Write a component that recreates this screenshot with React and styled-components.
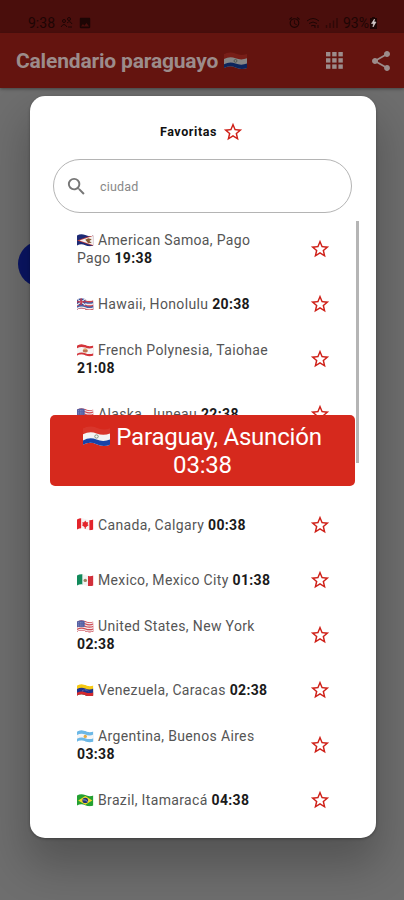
import React, { useId } from "react";
import styled, { createGlobalStyle } from "styled-components";
import { MdStarBorder, MdSearch, MdShare, MdAlarm, MdImage } from "react-icons/md";

const GlobalStyle = createGlobalStyle`
  * {
    box-sizing: border-box;
  }
  body {
    margin: 0;
    font-family: Roboto, "Liberation Sans", sans-serif;
  }
`;

const Screen = styled.div`
  position: relative;
  display: flex;
  flex-direction: column;
  width: 404px;
  height: 900px;
  overflow: hidden;
  background: #6e6e6e;
`;

const StatusBar = styled.div`
  display: flex;
  align-items: center;
  height: 33px;
  padding: 12px 26px 0 28px;
  background: #4a0e0c;
  color: #1d0504;
  font-size: 14px;
`;

const StatusGroup = styled.div`
  display: flex;
  align-items: center;
  gap: ${(props) => props.gap}px;
  margin-left: ${(props) => (props.end ? "auto" : "0")};
`;

const AppBar = styled.div`
  display: flex;
  align-items: center;
  height: 55px;
  padding: 0 11px 0 16px;
  background: #64140f;
  box-shadow: 0 1px 3px rgba(0, 0, 0, 0.4);
  color: #9c8c8b;
  z-index: 1;
`;

const Title = styled.h1`
  display: flex;
  align-items: center;
  gap: 6px;
  flex: 1;
  margin: 0;
  font-size: 21px;
  font-weight: 700;
  letter-spacing: -0.18px;
  white-space: nowrap;
`;

const DimmedFlag = styled.span`
  display: flex;
  filter: brightness(0.55);
`;

const BarIcons = styled.div`
  display: flex;
  align-items: center;
  gap: 26px;
`;

const DayCircle = styled.div`
  position: absolute;
  top: 241px;
  left: 18px;
  width: 46px;
  height: 46px;
  border-radius: 50%;
  background: #0a1565;
`;

const Dialog = styled.div`
  position: relative;
  display: flex;
  flex-direction: column;
  width: 346px;
  height: 742px;
  margin: 8px 0 0 30px;
  border-radius: 15px;
  background: #fff;
  box-shadow: 0 24px 44px 4px rgba(0, 0, 0, 0.24), 0 1px 3px rgba(0, 0, 0, 0.3);
`;

const DialogHeader = styled.div`
  display: flex;
  align-items: center;
  justify-content: center;
  gap: 5px;
  height: 63px;
  padding: 8px 2px 0 0;
  color: #111;
  font-size: 12.5px;
  font-weight: 700;
  letter-spacing: 0.6px;
`;

const SearchBox = styled.label`
  display: flex;
  align-items: center;
  gap: 12px;
  width: 299px;
  height: 54px;
  margin-left: 23px;
  padding-left: 11px;
  border: 1px solid #b4b4b4;
  border-radius: 27px;
  color: #777;
`;

const SearchText = styled.span`
  padding-top: 1px;
  font-size: 12.5px;
  letter-spacing: 0.2px;
  color: #888;
`;

const ListArea = styled.div`
  display: flex;
  flex: 1;
  margin-top: 8px;
`;

const CityList = styled.ul`
  width: 326px;
  margin: 0;
  padding: 0.5px 0 0 47px;
  list-style: none;
`;

const CityRow = styled.li`
  display: flex;
  align-items: center;
  justify-content: space-between;
  height: 55.15px;
  padding-right: 25px;
`;

const CityText = styled.div`
  width: 200px;
  padding-top: 1px;
  color: #555;
  font-size: 14px;
  line-height: 17.5px;
  letter-spacing: 0.35px;

  b {
    color: #1a1a1a;
    font-weight: 700;
  }

  svg {
    margin-right: 4.5px;
    vertical-align: -1.5px;
  }
`;

const ScrollThumb = styled.div`
  width: 3px;
  height: 242px;
  background: #b5b5b5;
`;

const Star = styled(MdStarBorder)`
  flex-shrink: 0;
  color: #cf2018;
`;

const Banner = styled.div`
  position: absolute;
  top: 319px;
  left: 20px;
  width: 305px;
  height: 71px;
  padding-top: 8px;
  border-radius: 5px;
  background: #d6291d;
  color: #fff;
  font-size: 24px;
  line-height: 28px;
  letter-spacing: -0.2px;
  text-align: center;

  svg {
    margin-right: 6px;
    vertical-align: -2px;
  }
`;

// horizontal bands that follow the wave of the flag
const stripes = (colors) =>
  colors.map((color, i) => {
    const top = (i * 20) / colors.length;
    return <path key={i} d={`M0 ${top + 1}Q7 ${top - 3} 14 ${top}T28 ${top}V22H0z`} fill={color} />;
  });

const pales = (colors) =>
  colors.map((color, i) => <rect key={i} x={(i * 28) / 3} y="-2" width="9.6" height="24" fill={color} />);

const flags = {
  py: (
    <>
      {stripes(["#d8362b", "#f4f4f4", "#1743a8"])}
      <circle cx="14" cy="10" r="1.8" fill="none" stroke="#7d917d" />
    </>
  ),
  as: (
    <>
      <rect y="-2" width="28" height="24" fill="#1d2a75" />
      <path d="M0 10 28 0v20z" fill="#c33a36" />
      <path d="M4 10 28 1.5v17z" fill="#f3f0ee" />
      <path d="M14 9l5-3 6 2-4 3 4 3-6 1z" fill="#8a5a33" />
    </>
  ),
  hi: (
    <>
      {stripes(["#eee", "#d0414a", "#4661a8", "#eee", "#d0414a", "#4661a8", "#eee", "#d0414a"])}
      <rect y="-1" width="14" height="12" fill="#31479a" />
      <path d="M0 0l14 11M14 0L0 11" stroke="#eee" strokeWidth="2" />
      <path d="M7 -1v12M0 5.5h14" stroke="#cf3b46" strokeWidth="2.4" />
    </>
  ),
  pf: (
    <>
      {stripes(["#d4353b", "#f6f6f6", "#f6f6f6", "#d4353b"])}
      <circle cx="14" cy="10" r="4" fill="#d9a06a" />
      <path d="M10 11h8" stroke="#a8473d" strokeWidth="2" />
    </>
  ),
  us: (
    <>
      {stripes(["#d04b55", "#f1e9ea", "#d04b55", "#f1e9ea", "#d04b55", "#f1e9ea", "#d04b55", "#f1e9ea", "#d04b55"])}
      <rect y="-1" width="13" height="12" fill="#5460a4" />
      <path d="M2 3h9M2 6h9M2 9h9" stroke="#c9cde5" strokeDasharray="1 2" />
    </>
  ),
  ca: (
    <>
      <rect y="-2" width="28" height="24" fill="#f6f3f3" />
      <path d="M0-2h7v24H0zM21-2h7v24h-7z" fill="#e3242b" />
      <path d="M14 3l2 3 3 0-1 4 2 1-5 4v3h-2v-3l-5-4 2-1-1-4 3 0z" fill="#e3242b" />
    </>
  ),
  mx: (
    <>
      {pales(["#128a5b", "#f3f3f3", "#d22f3a"])}
      <circle cx="14" cy="10" r="3" fill="#9a8360" />
    </>
  ),
  ve: (
    <>
      {stripes(["#f6c913", "#20348e", "#d5292e"])}
      <path d="M9 11q5-4 10 0" fill="none" stroke="#fff" strokeDasharray="1 1.5" />
    </>
  ),
  ar: (
    <>
      {stripes(["#6cb8e6", "#f5f5f5", "#6cb8e6"])}
      <circle cx="14" cy="10" r="2.8" fill="#e3ab45" />
    </>
  ),
  br: (
    <>
      <rect y="-2" width="28" height="24" fill="#24a132" />
      <path d="M14 2l12 8-12 8L2 10z" fill="#f3d72a" />
      <circle cx="14" cy="10" r="4.8" fill="#1d3274" />
      <path d="M10 9q4-1 8 3" fill="none" stroke="#e8eef5" />
    </>
  ),
};

const Flag = ({ code, width }) => {
  const clip = useId();
  return (
    <svg width={width} height={width * 0.76} viewBox="0 -1.5 28 22.5" preserveAspectRatio="none" aria-hidden="true">
      <clipPath id={clip}>
        <path d="M0 1Q7-3 14 .5T28 1V19Q21 22 14 18.5T0 19z" />
      </clipPath>
      <g clipPath={`url(#${clip})`}>{flags[code]}</g>
    </svg>
  );
};

const PeopleIcon = () => (
  <svg width="13" height="13" viewBox="0 0 13 13" fill="none" stroke="currentColor">
    <circle cx="4" cy="5" r="1.5" />
    <circle cx="9" cy="3" r="1.5" />
    <path d="M1 11q3-5 6 0M7 7q3-3 5 1M8 11h4" />
  </svg>
);

const WifiIcon = () => (
  <svg width="14" height="12" viewBox="0 0 14 12" fill="none" stroke="currentColor">
    <path d="M1 4q6-5 12 0M3 6.500q4-3 8 0M5 9q2-1.500 4 0M9 11V8M12 8v3" />
  </svg>
);

const SignalIcon = () => (
  <svg width="13" height="11" viewBox="0 0 13 11" stroke="currentColor" strokeWidth="1.4">
    <path d="M1.500 8v3M5 6v5M8.500 3.500V11M12 1v10" opacity="0.6" />
  </svg>
);

const BatteryIcon = () => (
  <svg width="9" height="12" viewBox="0 0 9 12">
    <path d="M3 0h3v1h2v11H1V1h2z" fill="currentColor" />
    <path d="M5.500 2L2.500 6.500h2L4 10l3-5H5z" fill="#d5cccc" stroke="#d5cccc" strokeWidth="0.6" />
  </svg>
);

const AppsIcon = () => (
  <svg width="17" height="17" viewBox="0 0 17 17" fill="currentColor">
    {[0, 6.2, 12.4].map((y) =>
      [0, 6.2, 12.4].map((x) => <rect key={`${x}-${y}`} x={x} y={y} width="4.4" height="4.4" />)
    )}
  </svg>
);

const cities = [
  { flag: "as", name: "American Samoa, Pago Pago", time: "19:38" },
  { flag: "hi", name: "Hawaii, Honolulu", time: "20:38" },
  { flag: "pf", name: "French Polynesia, Taiohae", time: "21:08" },
  { flag: "us", name: "Alaska, Juneau", time: "22:38" },
  null,
  { flag: "ca", name: "Canada, Calgary", time: "00:38" },
  { flag: "mx", name: "Mexico, Mexico City", time: "01:38" },
  { flag: "us", name: "United States, New York", time: "02:38" },
  { flag: "ve", name: "Venezuela, Caracas", time: "02:38" },
  { flag: "ar", name: "Argentina, Buenos Aires", time: "03:38" },
  { flag: "br", name: "Brazil, Itamaracá", time: "04:38" },
];

const City = ({ city }) => (
  <CityRow>
    {city && (
      <>
        <CityText>
          <Flag code={city.flag} width={16.5} />
          {city.name} <b>{city.time}</b>
        </CityText>
        <Star size={22} />
      </>
    )}
  </CityRow>
);

const App = () => {
  return (
    <>
      <GlobalStyle />
      <Screen>
        <StatusBar>
          <StatusGroup gap={5}>
            <span>9:38</span>
            <PeopleIcon />
            <MdImage size={14} />
          </StatusGroup>
          <StatusGroup gap={5} end>
            <MdAlarm size={13} />
            <WifiIcon />
            <SignalIcon />
            <StatusGroup gap={0}>
              <span>93%</span>
              <BatteryIcon />
            </StatusGroup>
          </StatusGroup>
        </StatusBar>
        <AppBar>
          <Title>
            Calendario paraguayo
            <DimmedFlag>
              <Flag code="py" width={23} />
            </DimmedFlag>
          </Title>
          <BarIcons>
            <AppsIcon />
            <MdShare size={24} />
          </BarIcons>
        </AppBar>
        <DayCircle />
        <Dialog>
          <DialogHeader>
            Favoritas
            <Star size={22} />
          </DialogHeader>
          <SearchBox>
            <MdSearch size={23} />
            <SearchText>ciudad</SearchText>
          </SearchBox>
          <ListArea>
            <CityList>
              {cities.map((city, i) => (
                <City key={i} city={city} />
              ))}
            </CityList>
            <ScrollThumb />
          </ListArea>
          <Banner>
            <Flag code="py" width={27} />
            Paraguay, Asunción
            <br />
            03:38
          </Banner>
        </Dialog>
      </Screen>
    </>
  );
};

export default App;
